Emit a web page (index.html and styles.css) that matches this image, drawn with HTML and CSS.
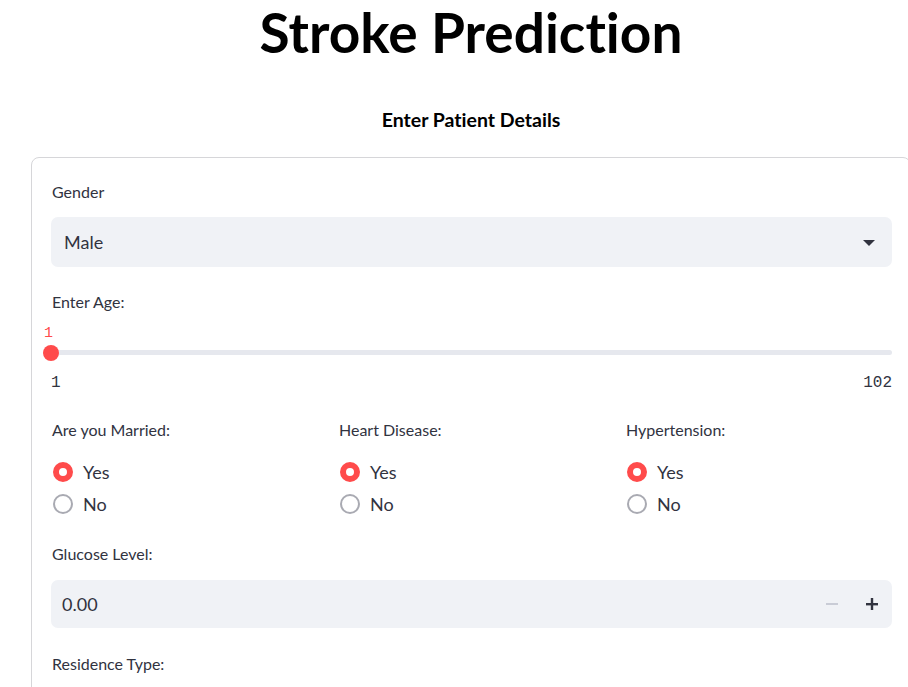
FILE: index.html
```html
<!DOCTYPE html>
<html>
<head>
<meta charset="utf-8">
<link rel="stylesheet" href="styles.css">
</head>
<body>
<div class="main">
  <h1 class="title">Stroke Prediction</h1>
  <h3 class="subtitle">Enter Patient Details</h3>
  <div class="form">
    <div class="field">
      <div class="label">Gender</div>
      <div class="select">
        <span>Male</span>
        <svg class="caret" width="14" height="8" viewBox="0 0 14 8"><path d="M1 1h12L7 7z" fill="#31333f"/></svg>
      </div>
    </div>
    <div class="field">
      <div class="label">Enter Age:</div>
      <div class="slider">
        <div class="slider-value">1</div>
        <div class="track"><div class="thumb"></div></div>
        <div class="ticks"><span>1</span><span>102</span></div>
      </div>
    </div>
    <div class="cols">
      <div class="col">
        <div class="label">Are you Married:</div>
        <div class="radio"><span class="dot on"></span>Yes</div>
        <div class="radio"><span class="dot"></span>No</div>
      </div>
      <div class="col">
        <div class="label">Heart Disease:</div>
        <div class="radio"><span class="dot on"></span>Yes</div>
        <div class="radio"><span class="dot"></span>No</div>
      </div>
      <div class="col">
        <div class="label">Hypertension:</div>
        <div class="radio"><span class="dot on"></span>Yes</div>
        <div class="radio"><span class="dot"></span>No</div>
      </div>
    </div>
    <div class="field glucose">
      <div class="label">Glucose Level:</div>
      <div class="number">
        <span class="num-val">0.00</span>
        <span class="step minus"><svg width="12" height="2" viewBox="0 0 12 2"><rect width="12" height="2" fill="#c9ccd6"/></svg></span>
        <span class="step plus"><svg width="12" height="12" viewBox="0 0 12 12"><rect x="0" y="5" width="12" height="2.4" fill="#31333f"/><rect x="4.8" y="0" width="2.4" height="12" fill="#31333f"/></svg></span>
      </div>
    </div>
    <div class="field last">
      <div class="label">Residence Type:</div>
    </div>
  </div>
</div>
</body>
</html>
```
FILE: styles.css
```css
html, body {
  margin: 0;
  padding: 0;
  overflow: hidden;
  background: #fff;
}
body {
  font-family: Lato, "Noto Sans", sans-serif;
  font-variant-ligatures: none;
  color: #31333f;
  width: 908px;
  height: 687px;
}
.main {
  width: 880px;
  margin-left: 31px;
}
.title {
  margin: -1px 3px 0;
  text-align: center;
  font-size: 55px;
  line-height: 66px;
  font-weight: 700;
  color: #000;
}
.subtitle {
  margin: 37px 3px 0;
  text-align: center;
  font-size: 19.5px;
  line-height: 36px;
  font-weight: 700;
  color: #000;
}
.form {
  margin-top: 19px;
  border: 1px solid #d6d6d9;
  border-radius: 8px;
  padding: 20px 18px 20px 19px;
  display: flex;
  flex-direction: column;
}
.label {
  font-size: 16px;
  line-height: 28px;
  color: #31333f;
  padding-left: 1px;
}
.field { margin-bottom: 21px; }
.field.glucose { margin-bottom: 22px; }
.field.last { margin-bottom: 0; }
.select {
  margin-top: 11px;
  height: 50px;
  background: #f0f2f6;
  border-radius: 7px;
  display: flex;
  align-items: center;
  justify-content: space-between;
  padding: 0 16px 0 13px;
  font-size: 18px;
}
.caret { margin-top: 1px; }
.slider { margin-top: 8px; }
.slider-value {
  font-family: "Liberation Mono", monospace;
  color: #ff4b4b;
  font-size: 15px;
  line-height: 20px;
  width: 10px;
  margin-left: -7px;
}
.track {
  margin-top: 6px;
  height: 5px;
  background: #e6e8ee;
  border-radius: 3px;
  position: relative;
}
.thumb {
  position: absolute;
  left: -8px;
  top: -5px;
  width: 16px;
  height: 16px;
  border-radius: 50%;
  background: #ff4b4b;
}
.ticks {
  margin-top: 18px;
  display: flex;
  justify-content: space-between;
  font-family: "Liberation Mono", monospace;
  font-size: 16px;
  line-height: 20px;
  color: #31333f;
}
.cols {
  margin-top: 2px;
  display: grid;
  grid-template-columns: repeat(3, 1fr);
  column-gap: 20px;
  margin-bottom: 20px;
}
.col .label { margin-bottom: 12px; }
.radio {
  display: flex;
  align-items: center;
  font-size: 18px;
  line-height: 32px;
  color: #31333f;
}
.dot {
  box-sizing: border-box;
  width: 20px;
  height: 20px;
  border-radius: 50%;
  border: 2px solid #a9aab2;
  margin: 0 10px 0 2px;
  background: #fff;
}
.dot.on {
  border: 6px solid #ff4b4b;
  background: #fff;
}
.number {
  margin-top: 12px;
  height: 48px;
  background: #f0f2f6;
  border-radius: 7px;
  display: flex;
  align-items: center;
  padding: 0 0 0 11px;
  font-size: 18px;
}
.num-val { flex: 1; }
.step {
  display: flex;
  align-items: center;
  justify-content: center;
  width: 40px;
  height: 48px;
}
```
